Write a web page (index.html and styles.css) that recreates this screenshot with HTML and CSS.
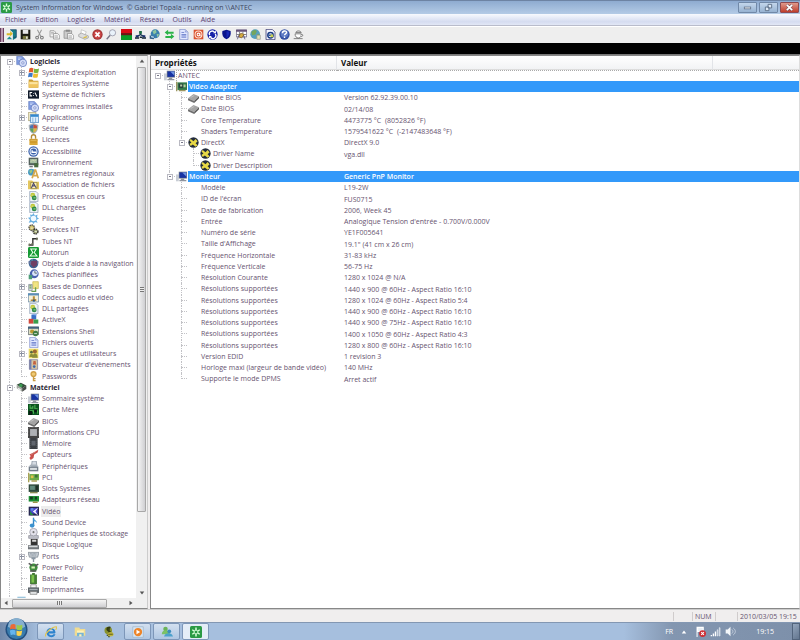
FILE: index.html
```
<!DOCTYPE html>
<html lang="fr">
<head>
<meta charset="utf-8">
<title>System Information for Windows</title>
<link rel="stylesheet" href="styles.css">
</head>
<body>
<svg class="sprite" aria-hidden="true">
<symbol id="recycle" viewBox="0 0 16 16"><rect width="16" height="16" rx="2" fill="#2b9a45"/><path d="M8 2v4M3 5l3 2M13 5l-3 2M3 11l3-2M13 11l-3-2M8 14v-4" stroke="#d9ffd9" stroke-width="2"/><circle cx="8" cy="8" r="2.500" fill="none" stroke="#d9ffd9"/></symbol>
<symbol id="exit" viewBox="0 0 16 16"><path d="M6 1h9v12l-5 3V5z" fill="#187d86"/><path d="M6 1h9v11h-4" fill="none" stroke="#123c66"/><path d="M1 6h5V3l4 4-4 4V9H1z" fill="#d8b82a"/><path d="M1 15l4-4 4 4z" fill="#208e94"/></symbol>
<symbol id="save" viewBox="0 0 16 16"><path d="M1 1h14v14H1z" fill="#1c1c14"/><path d="M4 1h8v6H4z" fill="#e8e8e8"/><path d="M4 10h8v5H4z" fill="#77773e"/><path d="M9 11h2v3H9z" fill="#fff"/></symbol>
<symbol id="cut" viewBox="0 0 16 16"><path d="M5 1l5 10M11 1L6 11" stroke="#999" stroke-width="1.500"/><g fill="none" stroke="#777" stroke-width="1.500"><circle cx="4.500" cy="12.500" r="2"/><circle cx="11.500" cy="12.500" r="2"/></g></symbol>
<symbol id="copy" viewBox="0 0 16 16"><g fill="#f4f4f4" stroke="#888"><path d="M1.500 2.500h6l2 2v7h-8z"/><path d="M6.500 6.500h6l3 3v5h-9z"/></g><path d="M3 5h4M3 7h3M8 10h5M8 12h5" stroke="#999"/></symbol>
<symbol id="paste" viewBox="0 0 16 16"><path d="M1.500 2.500h11v11h-11z" fill="#ccc" stroke="#888"/><path d="M4 1h6v3H4z" fill="#888"/><path d="M6.500 6.500h6l3 3v5h-9z" fill="#f6f6f6" stroke="#888"/><path d="M8 10h5M8 12h5" stroke="#999"/></symbol>
<symbol id="print" viewBox="0 0 16 16"><path d="M5 1l7 3-2 5-6-2z" fill="#fff" stroke="#bbb"/><path d="M1 8l4-2 10 4v3l-5 2-9-4z" fill="#ddd" stroke="#999"/><path d="M8 13l5-2" stroke="#d8bc42" stroke-width="2"/></symbol>
<symbol id="stop" viewBox="0 0 16 16"><circle cx="8" cy="8" r="7.500" fill="#9f3434"/><circle cx="8" cy="8" r="6" fill="#c94444"/><path d="M5 5l6 6M11 5l-6 6" stroke="#fff" stroke-width="2.500"/></symbol>
<symbol id="find" viewBox="0 0 16 16"><circle cx="9.500" cy="5.500" r="4.500" fill="#e9f2fa" stroke="#889"/><path d="M6 9l-5 6" stroke="#778" stroke-width="2"/></symbol>
<symbol id="redgreen" viewBox="0 0 16 16"><path d="M0 0h16v8H0z" fill="#d80d16"/><path d="M0 7h16v9H0z" fill="#0a9b27"/><path d="M0 6h16v3H0z" fill="#6b1414"/></symbol>
<symbol id="net" viewBox="0 0 16 16"><path d="M8 3v6M3 11l5-3 5 3" stroke="#173750" fill="none" stroke-width="2"/><path d="M6 3h4v4H6z" fill="#1d6c45"/><path d="M1 9h4v3H1zM11 9h4v3h-4z" fill="#1b2f70"/><path d="M0 13h6M7 12h3M10 13h6" stroke="#123" stroke-width="2"/></symbol>
<symbol id="globe" viewBox="0 0 16 16"><circle cx="9" cy="7" r="6.500" fill="#3a7fae"/><path d="M5 3l5-2 1 4-4 3zM11 7l4 1-3 4z" fill="#8fc79e"/><path d="M1 9l7 2-1 4-6-1z" fill="#35618a"/><path d="M3 10l4 1v2l-4-1z" fill="#bfe0f5"/></symbol>
<symbol id="swap" viewBox="0 0 16 16"><path d="M1 5l5-4v3h8v3H6v2zM15 11l-5-4v3H2v3h8v2z" fill="#2bb347"/></symbol>
<symbol id="doc" viewBox="0 0 16 16"><path d="M2.500.5h8l4 4v11h-12z" fill="#e2e8ff" stroke="#7686c4"/><path d="M10 1v4h4" fill="#9aa8dc"/><path d="M5 5h4M5 8h7M5 10h7M5 12h7" stroke="#4a62bd"/></symbol>
<symbol id="mail" viewBox="0 0 16 16"><path d="M1 1h14v14H1z" fill="#d95330"/><circle cx="8" cy="8" r="5" fill="none" stroke="#ffe1cf" stroke-width="1.500"/><circle cx="8" cy="8" r="2" fill="none" stroke="#fff" stroke-width="1.500"/><path d="M10 6v4h3" stroke="#fff" fill="none"/></symbol>
<symbol id="refresh" viewBox="0 0 16 16"><circle cx="8" cy="8" r="7.500" fill="#1521a8"/><path d="M4 9a4 4 0 0 1 7-4M12 7a4 4 0 0 1-7 5" stroke="#fff" fill="none" stroke-width="2"/><path d="M9 6h4V2zM7 10H3v4z" fill="#fff"/></symbol>
<symbol id="shield" viewBox="0 0 16 16"><path d="M8 1l6 2c1 6-1 10-6 12C3 13 1 9 2 3z" fill="#0b158c"/><path d="M8 3l4 1c0 4-1 7-4 9z" fill="#1a29b7"/></symbol>
<symbol id="grid" viewBox="0 0 16 16"><path d="M.5 1.500h15v10H.5z" fill="#fff" stroke="#4b4370"/><path d="M0 1h16v3H0z" fill="#665279"/><path d="M5 4v8M10 4v8M1 8h14" stroke="#555"/><path d="M7 6l5 2-4 5-4-2z" fill="#d3a93e" stroke="#835d22"/><path d="M4 9l-2 6M11 9l2 6" stroke="#443b62"/></symbol>
<symbol id="world" viewBox="0 0 16 16"><circle cx="7.500" cy="7.500" r="7" fill="#579fbd"/><path d="M2 4l5-3 3 2-2 5-5 1zM10 8l4-1-2 6-3 1z" fill="#76a65b"/><path d="M10 9h5v6h-5z" fill="#e7e1b2" stroke="#999"/></symbol>
<symbol id="pageie" viewBox="0 0 16 16"><path d="M1.500.5h9l4 4v11h-13z" fill="#f5f5ff" stroke="#202060"/><circle cx="8" cy="9" r="4" fill="none" stroke="#173a84" stroke-width="2"/><path d="M5 9h6" stroke="#173a84" stroke-width="2"/><path d="M8 8h4v4H8z" fill="#c9cf4c"/></symbol>
<symbol id="help" viewBox="0 0 16 16"><circle cx="8" cy="8" r="7.500" fill="#3451a5"/><circle cx="8" cy="7" r="5.500" fill="#5e7bc4"/><path d="M5 6c0-4 6-4 6-1 0 2-3 2-3 4M8 11v2" stroke="#fff" fill="none" stroke-width="2"/></symbol>
<symbol id="cup" viewBox="0 0 16 16"><path d="M3 7h9c0 3-1 6-4 6s-5-2-5-6z" fill="#fff" stroke="#555"/><path d="M12 8c3-1 3 3 0 3M1 14h13M4 5c2-3 6-3 8 0z" stroke="#555" fill="#eee"/></symbol>
<symbol id="soft" viewBox="0 0 16 16"><path d="M1 .5h8l3 3v9H1z" fill="#7f9be0" stroke="#7189c4"/><circle cx="10" cy="10" r="5.500" fill="#d3dcf7" stroke="#536db8"/><circle cx="10" cy="10" r="1.700" fill="#fff" stroke="#647bc2"/><path d="M3 3h5M3 5h3" stroke="#e3eaff"/></symbol>
<symbol id="win" viewBox="0 0 16 16"><path d="M2 2c2-1 4-1 6 0L7 8c-2-1-4-1-6 0z" fill="#e45c2b"/><path d="M9 2c2 1 4 1 7 0l-1 6c-2 1-4 1-7 0z" fill="#7eb63b"/><path d="M1 9c2-1 4-1 6 0l-1 6c-2-1-4-1-6 0z" fill="#3c79c9"/><path d="M8 9c2 1 4 1 7 0l-1 6c-2 1-5 1-7 0z" fill="#f0bd32"/></symbol>
<symbol id="folder" viewBox="0 0 16 16"><path d="M1 2h5l2 2h7v10H1z" fill="#c79c38"/><path d="M1 5h14v9H1z" fill="#f0c55e"/><path d="M2 6h12v3H2z" fill="#fbe4a0"/></symbol>
<symbol id="cmd" viewBox="0 0 16 16"><path d="M0 2h16v12H0z" fill="#111b2b"/><path d="M6 5H3v5h3M8 6v1M8 9v1M10 5l3 6" stroke="#fff" fill="none" stroke-width="1.500"/></symbol>
<symbol id="apps" viewBox="0 0 16 16"><path d="M.5.5h11v12H.5z" fill="#f4ecc8" stroke="#a29869"/><path d="M3.500 3.500h12v12h-12z" fill="#dceeff" stroke="#2f74b5"/><path d="M4 4h11v3H4z" fill="#3289cf"/><path d="M7 8v7M11 8v7" stroke="#699fca"/></symbol>
<symbol id="sec" viewBox="0 0 16 16"><path d="M8 0l7 3c0 7-2 11-7 13C3 14 1 10 1 3z" fill="#a8b0b8"/><path d="M8 2v6H3V4z" fill="#4874b5"/><path d="M8 2l5 2v4H8z" fill="#c94e3c"/><path d="M3 8h5v6C5 13 3 11 3 8z" fill="#58a160"/><path d="M8 8h5c0 3-2 5-5 6z" fill="#d9b73f"/></symbol>
<symbol id="lock" viewBox="0 0 16 16"><path d="M5 7V4c0-4 6-4 6 0v3" fill="none" stroke="#b38933" stroke-width="2"/><path d="M2 7h12v9H2z" fill="#dba938"/><path d="M3 8h10v2H3zM3 12h10" fill="#f3d176" stroke="#c38e25"/></symbol>
<symbol id="access" viewBox="0 0 16 16"><circle cx="8" cy="8" r="7.500" fill="#3b61aa"/><circle cx="8" cy="8" r="5" fill="none" stroke="#e8f0ff" stroke-width="1.500"/><path d="M6 6v3h6" stroke="#fff" fill="none" stroke-width="2"/></symbol>
<symbol id="env" viewBox="0 0 16 16"><path d="M1 1h14v11H1z" fill="#54615d"/><path d="M3 3h10v6H3z" fill="#a7c0a2"/><path d="M4 7l3-3 2 2 3-2" stroke="#e4e0bb" fill="none"/><path d="M9 9h6v6H9z" fill="#486c3e"/><path d="M2 14h5" stroke="#777" stroke-width="2"/></symbol>
<symbol id="region" viewBox="0 0 16 16"><circle cx="5" cy="6" r="5" fill="#4b9bc2"/><path d="M2 4l4-2v4L3 8z" fill="#9cc979"/><path d="M6 15l4-12h1l4 12M8 11h5" stroke="#d7a94b" stroke-width="2.500" fill="none"/></symbol>
<symbol id="assoc" viewBox="0 0 16 16"><path d="M0 2h6l2 2h8v11H0z" fill="#e3c660"/><path d="M4 5h9v9H4z" fill="#fff4b2" stroke="#8b7b38"/><path d="M5 13l3-7 4 7M6 10h4" stroke="#48456f" fill="none" stroke-width="1.500"/></symbol>
<symbol id="dll" viewBox="0 0 16 16"><path d="M2.500.5h9l3 3v12h-12z" fill="#edf3f7" stroke="#8798b0"/><circle cx="7" cy="6" r="3.500" fill="#c0c83a"/><circle cx="9" cy="10" r="3.500" fill="#2d8b4b"/><path d="M5 6h3M8 10h3" stroke="#e8efb0"/></symbol>
<symbol id="gearblue" viewBox="0 0 16 16"><path d="M8 0l2 4 4-2-1 4 3 2-4 2 2 4-4-1-2 3-2-3-5 1 2-4-3-3 4-1-1-4 3 1z" fill="#66aee0"/><circle cx="8" cy="8" r="4" fill="#f0f9ff"/></symbol>
<symbol id="gears" viewBox="0 0 16 16"><circle cx="5.500" cy="5.500" r="4" fill="#d5c46b" stroke="#555" stroke-width="2" stroke-dasharray="2 1"/><circle cx="11" cy="11" r="3.500" fill="#a3aa75" stroke="#383838" stroke-width="2" stroke-dasharray="2 1"/><path d="M4 6h3M10 11h3" stroke="#fff"/></symbol>
<symbol id="pipe" viewBox="0 0 16 16"><path d="M1 13h6V4h7" stroke="#333" fill="none" stroke-width="2"/><path d="M6 10v3M13 2v4M2 11v4" stroke="#72755f" stroke-width="2" fill="none"/></symbol>
<symbol id="auto" viewBox="0 0 16 16"><rect width="16" height="16" rx="2" fill="#169a34"/><path d="M4 3h8L9 8l4 5H3l4-5z" fill="none" stroke="#eaffec" stroke-width="1.500"/></symbol>
<symbol id="heart" viewBox="0 0 16 16"><circle cx="8" cy="8" r="7" fill="#386493"/><path d="M0 5h16l-3 5H3z" fill="#65739b"/><path d="M5 4h8v6l-5 4-4-5z" fill="#6f3f63"/><path d="M3 3l4-2v3z" fill="#5da0a7"/></symbol>
<symbol id="task" viewBox="0 0 16 16"><circle cx="9" cy="7" r="6.500" fill="#4a60ae"/><circle cx="10" cy="6" r="4" fill="#dce5fb"/><path d="M10 3v3h3" stroke="#344" fill="none"/><path d="M1 8l5 1v6H1z" fill="#4d9c77"/></symbol>
<symbol id="db" viewBox="0 0 16 16"><path d="M7 1h8v10H7z" fill="#f1e483" stroke="#c7b44c"/><path d="M1 5h5v9H1z" fill="#d8dde2" stroke="#78848d"/><path d="M2 7h3M2 10h3M5 15h6V9" stroke="#6c9e52" fill="none" stroke-width="2"/></symbol>
<symbol id="codec" viewBox="0 0 16 16"><path d="M.5 2.500h15v12H.5z" fill="#f4f0d9" stroke="#537899"/><path d="M0 2h16v3H0z" fill="#5a8eb8"/><path d="M7 6h3v4h2v3H4v-2h3z" fill="#b88c3b"/><path d="M7 11h3v3H7z" fill="#315b80"/></symbol>
<symbol id="activex" viewBox="0 0 16 16"><path d="M5 1h7v7H5z" fill="#3a71c8"/><path d="M1 7h7v7H1z" fill="#d1493c"/><path d="M8 8h7v6H8z" fill="#3a9e4b"/><path d="M5 1l2-1h6l-1 2z" fill="#89b0ea"/></symbol>
<symbol id="ext" viewBox="0 0 16 16"><path d="M.5 1.500h15v11H.5z" fill="#dedfc3" stroke="#454e56"/><path d="M0 1h16v3H0z" fill="#41617d"/><circle cx="6" cy="8" r="3" fill="#ba9832"/><circle cx="11" cy="11" r="4" fill="#417c45"/><path d="M9 11h4" stroke="#fff"/></symbol>
<symbol id="group" viewBox="0 0 16 16"><path d="M1 1h14v14H1z" fill="#ead968"/><circle cx="5" cy="6" r="2" fill="#566744"/><circle cx="10" cy="5" r="3" fill="#9a6633"/><path d="M2 13c1-7 6-5 6 0M6 14c1-8 8-8 8 0" fill="#8a8c3b"/></symbol>
<symbol id="event" viewBox="0 0 16 16"><path d="M2 1h12v14H2z" fill="#d8c7a2" stroke="#6f7198"/><path d="M2 1h3v14H2z" fill="#777eac"/><path d="M8 3h3l1 5H7z" fill="#c46342"/><circle cx="9" cy="11" r="2" fill="#3c67a8"/></symbol>
<symbol id="key" viewBox="0 0 16 16"><circle cx="8" cy="4.500" r="3.500" fill="#efcb74" stroke="#d0a048" stroke-width="2"/><path d="M8 8v7M9 11h2M9 14h2" stroke="#c99b44" stroke-width="2"/></symbol>
<symbol id="hard" viewBox="0 0 16 16"><path d="M1 4l6-3 8 4-6 4z" fill="#354d3b"/><path d="M1 4l8 5v5L1 9z" fill="#a1a79f"/><path d="M9 9l6-4v5l-6 4z" fill="#474b49"/><circle cx="7" cy="5" r="2.500" fill="#3c9a52"/><path d="M3 9l4 3" stroke="#eee" stroke-width="2"/></symbol>
<symbol id="pc" viewBox="0 0 16 16"><path d="M0 5h4v10H0z" fill="#c8cdd5"/><path d="M4 1h12v10H4z" fill="#78808c"/><path d="M5 2h10v8H5z" fill="#1733a2"/><path d="M9 2h6v6z" fill="#6e95e3"/><path d="M7 11h5v2h3v2H5v-2h2z" fill="#8e949e"/></symbol>
<symbol id="board" viewBox="0 0 16 16"><path d="M0 0h16v16H0z" fill="#0c5420"/><path d="M3 1v5h4V3M10 1v6h4M3 10h5v4M11 10h3v4" stroke="#4cb453" stroke-width="1.500" fill="none"/><path d="M9 8h4v4H9zM1 10h5v6H1z" fill="#071c11"/></symbol>
<symbol id="chip" viewBox="0 0 16 16"><path d="M0 9l8-6 8 3-7 7z" fill="#a4a4a4"/><path d="M0 9l9 4v3l-9-4z" fill="#6f6f6f"/><path d="M9 13l7-7v3l-7 7z" fill="#555"/><path d="M4 8l5-3" stroke="#ccc"/></symbol>
<symbol id="cpu" viewBox="0 0 16 16"><path d="M0 0h16v16H0z" fill="#444"/><path d="M3 3h10v10H3z" fill="#aeb1b5"/><path d="M1 2v12M2 1h12M15 2v12" stroke="#888" stroke-dasharray="1 1"/></symbol>
<symbol id="mem" viewBox="0 0 16 16"><path d="M2 0h12v16H2z" fill="#3b3f44"/><path d="M5 4h6v7H5z" fill="#61666e"/><path d="M3 1v14M13 1v14" stroke="#9a9ea5" stroke-dasharray="1 2"/></symbol>
<symbol id="sensor" viewBox="0 0 16 16"><path d="M15 1l-1 4-5 3-1 5-4 3-2-3 2-3-2-2 6-3z" fill="#c9504c"/><path d="M5 8l3-2 4-3" stroke="#f1a195"/></symbol>
<symbol id="periph" viewBox="0 0 16 16"><path d="M6 0h6l1 8H5z" fill="#d5dbe2" stroke="#7b8795"/><path d="M1 8h14v7H1z" fill="#727d89"/><path d="M3 10h10v3H3z" fill="#d9dee2"/><path d="M1 8l3-3h8l3 3" fill="#a8b1bb"/></symbol>
<symbol id="pci" viewBox="0 0 16 16"><path d="M2 3h14v9H2z" fill="#6bac48"/><path d="M4 5h4v4H4z" fill="#dec34c"/><path d="M10 4h4v4h-4z" fill="#3f733c"/><path d="M1 1v14M5 13h8" stroke="#a9a156" stroke-width="2"/></symbol>
<symbol id="slot" viewBox="0 0 16 16"><path d="M1 2h15v11H1z" fill="#304b3d"/><path d="M3 4h7v6H3z" fill="#5f897d"/><path d="M12 4h2v6h-2z" fill="#182320"/><path d="M3 14h11" stroke="#8c8b55" stroke-width="2"/></symbol>
<symbol id="nic" viewBox="0 0 16 16"><path d="M1 3h15v8H1z" fill="#1c8c32"/><path d="M3 4h4v4H3zM10 4h3v4h-3z" fill="#153d21"/><path d="M7 12h7" stroke="#968e3b" stroke-width="2"/></symbol>
<symbol id="video" viewBox="0 0 16 16"><path d="M1 1h15v13H1z" fill="#262750"/><path d="M3 3h11v8H3z" fill="#4c47cf"/><path d="M3 13V7l5 6z" fill="#258544"/><path d="M15 2L7 8l8 6-4-6z" fill="#f0f0ff"/><circle cx="6" cy="5" r="2" fill="#5d8be0"/></symbol>
<symbol id="sound" viewBox="0 0 16 16"><path d="M8 1v11" stroke="#3284c4" stroke-width="2"/><path d="M8 1c1 4 5 3 5 8-2-3-3-3-5-3z" fill="#4ca3db"/><ellipse cx="6" cy="12.500" rx="3.500" ry="3" fill="#3b91ce"/></symbol>
<symbol id="storage" viewBox="0 0 16 16"><path d="M1 11h14v4H1z" fill="#c1c3cb" stroke="#8a8b96"/><circle cx="8" cy="6" r="5.500" fill="#e2e1ea" stroke="#92919f"/><circle cx="8" cy="6" r="1.500" fill="#777"/></symbol>
<symbol id="disk" viewBox="0 0 16 16"><path d="M4 0h10v9H4z" fill="#333"/><path d="M6 1h6v3H6z" fill="#d6d6d6"/><path d="M0 9h16v6H0z" fill="#70757a"/><path d="M1 10h13v2H1z" fill="#d5d8da"/></symbol>
<symbol id="port" viewBox="0 0 16 16"><path d="M0 2h16l-2 7H2z" fill="#c4cbd2" stroke="#76808a"/><path d="M3 4h10M4 6h8" stroke="#65717d" stroke-dasharray="1 1"/><path d="M5 9h6v3H9v4H7v-4H5z" fill="#8a96a2"/></symbol>
<symbol id="power" viewBox="0 0 16 16"><circle cx="8" cy="8" r="6" fill="#3f8a3d"/><path d="M1 2l5 3M15 3l-5 3M3 13h9" stroke="#555" stroke-width="2"/><path d="M5 8h5" stroke="#d9f3ba" stroke-width="3"/></symbol>
<symbol id="battery" viewBox="0 0 16 16"><path d="M6 0h4v2h3v14H3V2h3z" fill="#457c35"/><path d="M5 3h4v11H5z" fill="#7bc24c"/></symbol>
<symbol id="printer" viewBox="0 0 16 16"><path d="M4 1h8v5H4z" fill="#f4f4f4" stroke="#777"/><path d="M0 5h16v8H0z" fill="#5e656b"/><path d="M2 7h12v2H2z" fill="#a5adb3"/><path d="M3 11h10v4H3z" fill="#e5e7e9" stroke="#777"/></symbol>
<symbol id="peek" viewBox="0 0 16 16"><path d="M2 1h12v10H2z" fill="#9cc6de"/></symbol>
<symbol id="card" viewBox="0 0 16 16"><path d="M2 2h14v11H2z" fill="#337847"/><path d="M4 4h6v6H4z" fill="#273b3b"/><path d="M6 5h3v3H6zM11 5h3v4h-3z" fill="#b7cda3"/><path d="M1 1v14M4 14h10" stroke="#9b9762" stroke-width="2"/></symbol>
<symbol id="dx" viewBox="0 0 16 16"><circle cx="8" cy="8" r="7.500" fill="#222b3c"/><path d="M4 3l4 3 3-3 3 3-3 3 3 3-3 2-4-3-3 2-2-3 3-2-3-3z" fill="#e7d846"/></symbol>
<symbol id="ie" viewBox="0 0 16 16"><path d="M13 10H5c1 3 5 3 6 1h3c-2 6-12 5-12-3 0-7 12-8 12 1zM5 7h6c-1-3-5-3-6 0z" fill="#2d83cd"/><path d="M1 14C-1 10 9 1 15 1c1 1 0 3-1 4" stroke="#e4c54d" fill="none" stroke-width="1.500"/></symbol>
<symbol id="files" viewBox="0 0 16 16"><path d="M1 2h6l1 2h7v9H1z" fill="#f1dc90"/><path d="M4 6h9v8H4z" fill="#fff2b8"/><path d="M4 14V9h9v5h-3v-3H7v3z" fill="#78b4d4"/></symbol>
<symbol id="coin" viewBox="0 0 16 16"><ellipse cx="7" cy="6" rx="5" ry="5" fill="#87922e"/><path d="M10 2c-5-1-6 3-2 5s2 6-3 5M8 1v14" stroke="#343c12" fill="none" stroke-width="2"/><ellipse cx="10" cy="11" rx="4" ry="3" fill="#bdb43d"/><path d="M7 11h6" stroke="#454a18"/></symbol>
<symbol id="play" viewBox="0 0 16 16"><path d="M1 1h14v14H1z" fill="#d6e6f4" stroke="#9fb6ca"/><circle cx="8" cy="8" r="5.500" fill="#ed8428"/><path d="M6 5l5 3-5 3z" fill="#fff"/></symbol>
<symbol id="users" viewBox="0 0 16 16"><circle cx="6" cy="4" r="3" fill="#6ab358"/><path d="M1 11c0-7 10-7 11 0z" fill="#7bc266"/><circle cx="11" cy="7" r="2.500" fill="#3b8dbd"/><path d="M4 14c1-6 11-6 12 0z" fill="#4ca1cd"/></symbol>
<symbol id="orb" viewBox="0 0 24 24"><circle cx="12" cy="12" r="11.500" fill="#224f80"/><circle cx="12" cy="12" r="10" fill="#387cae"/><path d="M3 9a9 9 0 0 1 18 0c-5 3-13 3-18 0z" fill="#86afcf"/><path d="M6 7c2-1 4-1 5 0v5c-2-1-4-1-6 0z" fill="#ed6a35"/><path d="M12 7c2 1 4 1 6 0v5c-2 1-4 1-6 0z" fill="#9bcc4a"/><path d="M5 13c2-1 4-1 6 0v5c-2-1-3-1-5 0z" fill="#65b4ed"/><path d="M12 13c2 1 4 1 6 0l-1 5c-2 1-3 1-5 0z" fill="#fbd34f"/></symbol>
<symbol id="flag" viewBox="0 0 16 16"><path d="M3 1v15M4 2h8v6H4z" stroke="#fff" fill="#e8eef5" stroke-width="1.500"/><circle cx="11" cy="11" r="5" fill="#cf2f35"/><path d="M9 9l4 4M13 9l-4 4" stroke="#fff" stroke-width="1.500"/></symbol>
<symbol id="signal" viewBox="0 0 16 16"><path d="M1 13h2v2H1zM4 11h2v4H4zM7 8h2v7H7z" fill="#fff"/><path d="M10.500 5.500h1v9h-1zM13.500 2.500h1v12h-1z" fill="#a9b6c5" stroke="#e8eef4"/></symbol>
<symbol id="speaker" viewBox="0 0 16 16"><path d="M1 5h3l4-4v14l-4-4H1z" fill="#f4f7fa"/><path d="M10 5c2 2 2 4 0 6M12 3c4 3 4 7 0 10" stroke="#dce4ed" fill="none"/></symbol>
<symbol id="arrow" viewBox="0 0 8 8"><path d="M1 6l3-4 3 4z" fill="currentColor"/></symbol>
</svg>

<header class="titlebar">
<svg class="icon"><use href="#recycle"/></svg>
<h1>System Information for Windows&nbsp; © Gabriel Topala - running on \\ANTEC</h1>
<div class="winbuttons">
<button type="button" aria-label="Minimize"><svg viewBox="0 0 18 10"><rect x="5.500" y="4.500" width="7" height="2" fill="#fff" stroke="#6a7a90"/></svg></button>
<button type="button" aria-label="Restore"><svg viewBox="0 0 18 10"><path d="M8.500 1.500h4v4h-4zM5.500 4.500h4v4h-4z" fill="#dce8f5" stroke="#596c84"/></svg></button>
<button type="button" class="close" aria-label="Close"><svg viewBox="0 0 18 10"><path d="M6 2l6 6M12 2L6 8" stroke="#6d4650" stroke-width="3"/><path d="M6 2l6 6M12 2L6 8" stroke="#fff" stroke-width="2"/></svg></button>
</div>
</header>
<nav class="menu"><button type="button">Fichier</button><button type="button">Edition</button><button type="button">Logiciels</button><button type="button">Matériel</button><button type="button">Réseau</button><button type="button">Outils</button><button type="button">Aide</button></nav>
<div class="toolbar"><span class="grip"></span><div class="tools">
<button type="button" aria-label="Quitter"><svg><use href="#exit"/></svg></button>
<button type="button" aria-label="Enregistrer"><svg><use href="#save"/></svg></button>
<button type="button" aria-label="Couper"><svg><use href="#cut"/></svg></button>
<button type="button" aria-label="Copier"><svg><use href="#copy"/></svg></button>
<button type="button" aria-label="Coller"><svg><use href="#paste"/></svg></button>
<button type="button" aria-label="Imprimer"><svg><use href="#print"/></svg></button>
<button type="button" aria-label="Arrêter"><svg><use href="#stop"/></svg></button>
<button type="button" aria-label="Rechercher"><svg><use href="#find"/></svg></button>
<button type="button" aria-label="Test"><svg><use href="#redgreen"/></svg></button>
<button type="button" aria-label="Réseau local"><svg><use href="#net"/></svg></button>
<button type="button" aria-label="Internet"><svg><use href="#globe"/></svg></button>
<button type="button" aria-label="Échanges"><svg><use href="#swap"/></svg></button>
<button type="button" aria-label="Rapport"><svg><use href="#doc"/></svg></button>
<button type="button" aria-label="Courriel"><svg><use href="#mail"/></svg></button>
<button type="button" aria-label="Actualiser"><svg><use href="#refresh"/></svg></button>
<button type="button" aria-label="Protection"><svg><use href="#shield"/></svg></button>
<button type="button" aria-label="Options"><svg><use href="#grid"/></svg></button>
<button type="button" aria-label="Site"><svg><use href="#world"/></svg></button>
<button type="button" aria-label="Page"><svg><use href="#pageie"/></svg></button>
<button type="button" aria-label="Assistance"><svg><use href="#help"/></svg></button>
<button type="button" aria-label="Don"><svg><use href="#cup"/></svg></button>
</div></div>
<div class="band"></div>

<main>
<aside>
<ul class="tree">
<li class="root"><i class="g first"><button type="button" class="box" aria-label="Réduire"></button></i><svg><use href="#soft"/></svg><b>Logiciels</b></li>
<li><i class="g v"></i><i class="g t"><button type="button" class="box plus" aria-label="Développer"></button></i><svg><use href="#win"/></svg><span>Système d'exploitation</span></li>
<li><i class="g v"></i><i class="g t"></i><svg><use href="#folder"/></svg><span>Répertoires Système</span></li>
<li><i class="g v"></i><i class="g t"></i><svg><use href="#cmd"/></svg><span>Système de fichiers</span></li>
<li><i class="g v"></i><i class="g t"></i><svg><use href="#soft"/></svg><span>Programmes installés</span></li>
<li><i class="g v"></i><i class="g t"><button type="button" class="box plus" aria-label="Développer"></button></i><svg><use href="#apps"/></svg><span>Applications</span></li>
<li><i class="g v"></i><i class="g t"></i><svg><use href="#sec"/></svg><span>Sécurité</span></li>
<li><i class="g v"></i><i class="g t"></i><svg><use href="#lock"/></svg><span>Licences</span></li>
<li><i class="g v"></i><i class="g t"></i><svg><use href="#access"/></svg><span>Accessibilité</span></li>
<li><i class="g v"></i><i class="g t"></i><svg><use href="#env"/></svg><span>Environnement</span></li>
<li><i class="g v"></i><i class="g t"></i><svg><use href="#region"/></svg><span>Paramètres régionaux</span></li>
<li><i class="g v"></i><i class="g t"></i><svg><use href="#assoc"/></svg><span>Association de fichiers</span></li>
<li><i class="g v"></i><i class="g t"></i><svg><use href="#dll"/></svg><span>Processus en cours</span></li>
<li><i class="g v"></i><i class="g t"></i><svg><use href="#dll"/></svg><span>DLL chargées</span></li>
<li><i class="g v"></i><i class="g t"></i><svg><use href="#gearblue"/></svg><span>Pilotes</span></li>
<li><i class="g v"></i><i class="g t"></i><svg><use href="#gears"/></svg><span>Services NT</span></li>
<li><i class="g v"></i><i class="g t"></i><svg><use href="#pipe"/></svg><span>Tubes NT</span></li>
<li><i class="g v"></i><i class="g t"></i><svg><use href="#auto"/></svg><span>Autorun</span></li>
<li><i class="g v"></i><i class="g t"></i><svg><use href="#heart"/></svg><span>Objets d'aide à la navigation</span></li>
<li><i class="g v"></i><i class="g t"></i><svg><use href="#task"/></svg><span>Tâches planifiées</span></li>
<li><i class="g v"></i><i class="g t"><button type="button" class="box plus" aria-label="Développer"></button></i><svg><use href="#db"/></svg><span>Bases de Données</span></li>
<li><i class="g v"></i><i class="g t"></i><svg><use href="#codec"/></svg><span>Codecs audio et vidéo</span></li>
<li><i class="g v"></i><i class="g t"></i><svg><use href="#dll"/></svg><span>DLL partagées</span></li>
<li><i class="g v"></i><i class="g t"></i><svg><use href="#activex"/></svg><span>ActiveX</span></li>
<li><i class="g v"></i><i class="g t"></i><svg><use href="#ext"/></svg><span>Extensions Shell</span></li>
<li><i class="g v"></i><i class="g t"></i><svg><use href="#doc"/></svg><span>Fichiers ouverts</span></li>
<li><i class="g v"></i><i class="g t"><button type="button" class="box plus" aria-label="Développer"></button></i><svg><use href="#group"/></svg><span>Groupes et utilisateurs</span></li>
<li><i class="g v"></i><i class="g t"></i><svg><use href="#event"/></svg><span>Observateur d'évènements</span></li>
<li><i class="g v"></i><i class="g t last"></i><svg><use href="#key"/></svg><span>Passwords</span></li>
<li class="root"><i class="g t"><button type="button" class="box" aria-label="Réduire"></button></i><svg><use href="#hard"/></svg><b>Matériel</b></li>
<li><i class="g v"></i><i class="g t"></i><svg><use href="#pc"/></svg><span>Sommaire système</span></li>
<li><i class="g v"></i><i class="g t"></i><svg><use href="#board"/></svg><span>Carte Mère</span></li>
<li><i class="g v"></i><i class="g t"></i><svg><use href="#chip"/></svg><span>BIOS</span></li>
<li><i class="g v"></i><i class="g t"></i><svg><use href="#cpu"/></svg><span>Informations CPU</span></li>
<li><i class="g v"></i><i class="g t"></i><svg><use href="#mem"/></svg><span>Mémoire</span></li>
<li><i class="g v"></i><i class="g t"></i><svg><use href="#sensor"/></svg><span>Capteurs</span></li>
<li><i class="g v"></i><i class="g t"></i><svg><use href="#periph"/></svg><span>Périphériques</span></li>
<li><i class="g v"></i><i class="g t"></i><svg><use href="#pci"/></svg><span>PCI</span></li>
<li><i class="g v"></i><i class="g t"></i><svg><use href="#slot"/></svg><span>Slots Systèmes</span></li>
<li><i class="g v"></i><i class="g t"></i><svg><use href="#nic"/></svg><span>Adapteurs réseau</span></li>
<li class="selected"><i class="g v"></i><i class="g t"></i><svg><use href="#video"/></svg><span>Vidéo</span></li>
<li><i class="g v"></i><i class="g t"></i><svg><use href="#sound"/></svg><span>Sound Device</span></li>
<li><i class="g v"></i><i class="g t"></i><svg><use href="#storage"/></svg><span>Périphériques de stockage</span></li>
<li><i class="g v"></i><i class="g t"></i><svg><use href="#disk"/></svg><span>Disque Logique</span></li>
<li><i class="g v"></i><i class="g t"><button type="button" class="box plus" aria-label="Développer"></button></i><svg><use href="#port"/></svg><span>Ports</span></li>
<li><i class="g v"></i><i class="g t"></i><svg><use href="#power"/></svg><span>Power Policy</span></li>
<li><i class="g v"></i><i class="g t"></i><svg><use href="#battery"/></svg><span>Batterie</span></li>
<li><i class="g v"></i><i class="g t last"></i><svg><use href="#printer"/></svg><span>Imprimantes</span></li>
<li class="root"><i class="g v"></i><svg><use href="#peek"/></svg></li>
</ul>
<div class="vscroll"><svg><use href="#arrow"/></svg><span class="thumb"><i></i></span><svg class="down"><use href="#arrow"/></svg></div>
<div class="hscroll"><svg class="left"><use href="#arrow"/></svg><span class="thumb"><i></i></span><svg class="right"><use href="#arrow"/></svg></div>
</aside>

<section class="details">
<table>
<colgroup><col class="c-name"><col class="c-value"><col></colgroup>
<thead><tr><th>Propriétés</th><th>Valeur</th><th></th></tr></thead>
<tbody>
<tr class="focus"><td><div class="name"><i class="g only"><button type="button" class="box" aria-label="Réduire"></button></i><svg><use href="#pc"/></svg><span>ANTEC</span></div></td><td colspan="2"></td></tr>
<tr class="band-row"><td><div class="name"><i class="g"></i><i class="g t"><button type="button" class="box" aria-label="Réduire"></button></i><svg><use href="#card"/></svg><span>Video Adapter</span></div></td><td colspan="2"></td></tr>
<tr><td><div class="name"><i class="g"></i><i class="g v"></i><i class="g t"></i><svg><use href="#chip"/></svg><span>Chaine BIOS</span></div></td><td colspan="2">Version 62.92.39.00.10</td></tr>
<tr><td><div class="name"><i class="g"></i><i class="g v"></i><i class="g t"></i><svg><use href="#chip"/></svg><span>Date BIOS</span></div></td><td colspan="2">02/14/08</td></tr>
<tr><td><div class="name"><i class="g"></i><i class="g v"></i><i class="g t"></i><svg></svg><span>Core Temperature</span></div></td><td colspan="2">4473775 °C&nbsp; (8052826 °F)</td></tr>
<tr><td><div class="name"><i class="g"></i><i class="g v"></i><i class="g t"></i><svg></svg><span>Shaders Temperature</span></div></td><td colspan="2">1579541622 °C&nbsp; (-2147483648 °F)</td></tr>
<tr><td><div class="name"><i class="g"></i><i class="g v"></i><i class="g t last"><button type="button" class="box" aria-label="Réduire"></button></i><svg><use href="#dx"/></svg><span>DirectX</span></div></td><td colspan="2">DirectX 9.0</td></tr>
<tr><td><div class="name"><i class="g"></i><i class="g v"></i><i class="g"></i><i class="g t"></i><svg><use href="#dx"/></svg><span>Driver Name</span></div></td><td colspan="2">vga.dll</td></tr>
<tr><td><div class="name"><i class="g"></i><i class="g v"></i><i class="g"></i><i class="g t last"></i><svg><use href="#dx"/></svg><span>Driver Description</span></div></td><td colspan="2"></td></tr>
<tr class="band-row"><td><div class="name"><i class="g"></i><i class="g t last"><button type="button" class="box" aria-label="Réduire"></button></i><svg><use href="#pc"/></svg><span>Moniteur</span></div></td><td colspan="2">Generic PnP Monitor</td></tr>
<tr><td><div class="name"><i class="g"></i><i class="g"></i><i class="g t"></i><svg></svg><span>Modèle</span></div></td><td colspan="2">L19-2W</td></tr>
<tr><td><div class="name"><i class="g"></i><i class="g"></i><i class="g t"></i><svg></svg><span>ID de l'écran</span></div></td><td colspan="2">FUS0715</td></tr>
<tr><td><div class="name"><i class="g"></i><i class="g"></i><i class="g t"></i><svg></svg><span>Date de fabrication</span></div></td><td colspan="2">2006, Week 45</td></tr>
<tr><td><div class="name"><i class="g"></i><i class="g"></i><i class="g t"></i><svg></svg><span>Entrée</span></div></td><td colspan="2">Analogique Tension d'entrée - 0.700V/0.000V</td></tr>
<tr><td><div class="name"><i class="g"></i><i class="g"></i><i class="g t"></i><svg></svg><span>Numéro de série</span></div></td><td colspan="2">YE1F005641</td></tr>
<tr><td><div class="name"><i class="g"></i><i class="g"></i><i class="g t"></i><svg></svg><span>Taille d'Affichage</span></div></td><td colspan="2">19.1" (41 cm x 26 cm)</td></tr>
<tr><td><div class="name"><i class="g"></i><i class="g"></i><i class="g t"></i><svg></svg><span>Fréquence Horizontale</span></div></td><td colspan="2">31-83 kHz</td></tr>
<tr><td><div class="name"><i class="g"></i><i class="g"></i><i class="g t"></i><svg></svg><span>Fréquence Verticale</span></div></td><td colspan="2">56-75 Hz</td></tr>
<tr><td><div class="name"><i class="g"></i><i class="g"></i><i class="g t"></i><svg></svg><span>Résolution Courante</span></div></td><td colspan="2">1280 x 1024 @ N/A</td></tr>
<tr><td><div class="name"><i class="g"></i><i class="g"></i><i class="g t"></i><svg></svg><span>Résolutions supportées</span></div></td><td colspan="2">1440 x 900 @ 60Hz - Aspect Ratio 16:10</td></tr>
<tr><td><div class="name"><i class="g"></i><i class="g"></i><i class="g t"></i><svg></svg><span>Résolutions supportées</span></div></td><td colspan="2">1280 x 1024 @ 60Hz - Aspect Ratio 5:4</td></tr>
<tr><td><div class="name"><i class="g"></i><i class="g"></i><i class="g t"></i><svg></svg><span>Résolutions supportées</span></div></td><td colspan="2">1440 x 900 @ 60Hz - Aspect Ratio 16:10</td></tr>
<tr><td><div class="name"><i class="g"></i><i class="g"></i><i class="g t"></i><svg></svg><span>Résolutions supportées</span></div></td><td colspan="2">1440 x 900 @ 75Hz - Aspect Ratio 16:10</td></tr>
<tr><td><div class="name"><i class="g"></i><i class="g"></i><i class="g t"></i><svg></svg><span>Résolutions supportées</span></div></td><td colspan="2">1400 x 1050 @ 60Hz - Aspect Ratio 4:3</td></tr>
<tr><td><div class="name"><i class="g"></i><i class="g"></i><i class="g t"></i><svg></svg><span>Résolutions supportées</span></div></td><td colspan="2">1280 x 800 @ 60Hz - Aspect Ratio 16:10</td></tr>
<tr><td><div class="name"><i class="g"></i><i class="g"></i><i class="g t"></i><svg></svg><span>Version EDID</span></div></td><td colspan="2">1 revision 3</td></tr>
<tr><td><div class="name"><i class="g"></i><i class="g"></i><i class="g t"></i><svg></svg><span>Horloge maxi (largeur de bande vidéo)</span></div></td><td colspan="2">140 MHz</td></tr>
<tr><td><div class="name"><i class="g"></i><i class="g"></i><i class="g t last"></i><svg></svg><span>Supporte le mode DPMS</span></div></td><td colspan="2">Arret actif</td></tr>
</tbody>
</table>
</section>
</main>

<div class="status"><span></span><span class="num">NUM</span><span class="gap"></span><span class="date">2010/03/05 19:15</span></div>
<footer class="taskbar">
<button type="button" class="start" aria-label="Démarrer"><svg><use href="#orb"/></svg></button>
<div class="apps">
<button type="button" class="open" aria-label="Internet Explorer"><svg><use href="#ie"/></svg></button>
<button type="button" aria-label="Explorateur"><svg><use href="#files"/></svg></button>
<button type="button" aria-label="Comptes"><svg><use href="#coin"/></svg></button>
<button type="button" class="open" aria-label="Lecteur"><svg><use href="#play"/></svg></button>
<button type="button" class="open" aria-label="Messenger"><svg><use href="#users"/></svg></button>
<button type="button" class="open active" aria-label="System Information"><svg><use href="#recycle"/></svg></button>
</div>
<div class="tray"><span class="lang">FR</span><svg class="up"><use href="#arrow"/></svg><svg><use href="#flag"/></svg><svg><use href="#signal"/></svg><svg><use href="#speaker"/></svg><time>19:15</time><button type="button" class="desk" aria-label="Bureau"></button></div>
</footer>
</body>
</html>
```
FILE: styles.css
```
* { box-sizing: border-box; }
body {
  margin: 0;
  height: 100vh;
  display: flex;
  flex-direction: column;
  overflow: hidden;
  background: #f0eeee;
  color: #67536f;
  font: 7px/11px "Open Sans", "Noto Sans", sans-serif;
}
button { margin: 0; padding: 0; border: 0; background: none; font: inherit; color: inherit; }
svg { display: block; flex: none; width: 11px; height: 11px; }
.sprite { position: absolute; width: 0; height: 0; }

.titlebar {
  display: flex;
  align-items: center;
  height: 14px;
  padding: 0 1px 1px;
  gap: 4px;
  border-top: 1px solid #6d83a3;
  background: linear-gradient(#8eabd0, #b4cbe6);
}
.titlebar h1 { flex: 1; margin: 0; font-size: 7px; font-weight: 400; color: #3c4660; }
.winbuttons { display: flex; gap: 2px; }
.winbuttons button { width: 19px; height: 11px; border: 1px solid #7189a8; border-radius: 1px; background: linear-gradient(#c3d6eb, #97b3d2); }
.winbuttons .close { border-color: #8f4a50; background: linear-gradient(#e09a8c, #bf3e2c); }
.winbuttons svg { width: 17px; height: 9px; }

.menu { display: flex; gap: 9px; height: 12px; padding-left: 5px; background: linear-gradient(#f8fafe, #d5dcf0 70%, #e2e7f5); border-bottom: 1px solid #b9bccb; color: #5c4370; }

.toolbar { display: flex; align-items: center; height: 17px; padding-bottom: 1px; background: #eee; border-top: 1px solid #fff; }
.grip { width: 4px; height: 14px; border: solid #6d4262; border-width: 0 1px; background: #b99bb2; }
.tools { display: grid; grid-template-columns: repeat(21, 1fr); width: 302px; }
.tools button { display: grid; place-items: center; }
.band { height: 12px; background: #000; border-bottom: 1px solid #777; }

main { flex: 1; min-height: 0; display: grid; grid-template-columns: 148px 1fr; gap: 2px; }
aside { display: grid; grid-template: 1fr 10px / 1fr 11px; min-height: 0; border: 1px solid #888; border-right-color: #ccc; background: #f0f0f0; }
.tree { margin: 0; padding: 0 0 0 1px; overflow: hidden; list-style: none; background: #fff; min-height: 0; white-space: nowrap; }
.tree li, .name { display: flex; height: 11px; }
.tree li:nth-child(4n), tbody tr:nth-child(4n) .name { height: 12px; }
.tree svg, .name svg { margin-left: 1px; }
.tree span, .tree b { margin-left: 2px; padding: 0 1px; }
.tree b { color: #2c2633; }
.selected span { background: #ededed; }

/* tree connector cells */
.g { position: relative; flex: none; width: 12px; display: grid; place-items: center; }
.g.v::before, .g.t::before, .g.first::before { content: ""; position: absolute; left: 6px; top: 0; bottom: 0; border-left: 1px dotted #c2c2c6; }
.g.first::before { top: 50%; }
.g.last::before { bottom: 50%; }
.g.t::after, .g.first::after, .g.only::after { content: ""; position: absolute; left: 6px; right: 0; top: 5px; border-top: 1px dotted #c2c2c6; }
.box { position: relative; z-index: 1; width: 6px; height: 6px; margin-left: 1px; border: 1px solid #b9b9c2; background: linear-gradient(#778, #778) center / 2px 1px no-repeat #fff; }
.box.plus { background: linear-gradient(#8a90a0, #8a90a0) center / 4px 1px no-repeat, linear-gradient(#8a90a0, #8a90a0) center / 1px 4px no-repeat #fff; }

.tree li:first-child, .tree li:nth-child(30) { gap: 0; }
.tree .root b { margin-left: 2px; }
.tree { padding-left: 2px; }

.vscroll { display: flex; flex-direction: column; align-items: center; justify-content: space-between; background: #f0f0f0; }
.vscroll svg, .hscroll svg { width: 6px; height: 6px; color: #555; margin: 2px; }
.vscroll .thumb { height: 82%; width: 9px; margin-bottom: 75px; }
.thumb { display: grid; place-items: center; border: 1px solid #a8a8a8; border-radius: 1px; background: linear-gradient(90deg, #f5f5f5, #cfcfd2); }
.thumb i { width: 4px; height: 5px; background: repeating-linear-gradient(#777 0 1px, #eee 1px 2px); }
.down { transform: rotate(180deg); }
.left { transform: rotate(270deg); }
.right { transform: rotate(90deg); }
.hscroll { display: flex; align-items: center; background: #f0f0f0; }
.hscroll .thumb { width: 95px; height: 9px; margin-right: auto; margin-left: 1px; background: linear-gradient(#f5f5f5, #cfcfd2); }
.hscroll .thumb i { width: 5px; height: 4px; background: repeating-linear-gradient(90deg, #777 0 1px, #eee 1px 2px); }

.details { min-width: 0; overflow: hidden; border: 1px solid #888; border-right-color: #ddd; background: #fff; }
table { width: 100%; table-layout: fixed; border-collapse: separate; border-spacing: 0; white-space: nowrap; }
.c-name { width: 186px; }
.c-value { width: 376px; }
th { height: 14px; padding: 0 4px; text-align: left; font-size: 8px; color: #111; border-right: 1px solid #e2e4e8; border-bottom: 1px solid #ddd; background: linear-gradient(#fff, #f2f3f5); }
th:last-child { border-right: 0; }
td { padding: 0; }
td + td { padding-left: 7px; }
.name span { flex: 1; margin-left: 1px; padding-left: 1px; }
.focus .name span, .focus td + td { border-top: 1px dotted #aaa; line-height: 10px; }
.focus .name span { border-left: 1px dotted #aaa; }
.band-row .name span, .band-row td + td { background: #3399fa; color: #fff; font-weight: 600; }

.status { display: flex; height: 13px; align-items: center; justify-content: flex-end; border-top: 1px solid #ccc; }
.status span { height: 9px; line-height: 9px; border-left: 1px solid #d0cccc; width: 19px; }
.status .num { width: 23px; padding-left: 2px; }
.status .gap { width: 22px; }
.status .date { width: 63px; padding-left: 2px; }

.taskbar { display: flex; align-items: center; height: 18px; background: linear-gradient(90deg, #7189ab, #a6bfde 5%, #a6bfde 78%, #8396b0 84%, #7d90aa); border-top: 1px solid #8397b2; }
.start { margin: -4px 7px 0 5px; }
.start svg { width: 23px; height: 23px; }
.apps { display: flex; flex: 1; gap: 2px; padding-left: 2px; }
.apps button { display: grid; place-items: center; width: 27px; height: 17px; border-radius: 2px; }
.apps .open { border: 1px solid #7d96b8; background: linear-gradient(#d3e0f0, #afc6e2); }
.apps .active { background: #e4edf7; }
.apps svg { width: 12px; height: 12px; }
.tray { display: flex; align-items: center; gap: 4px; color: #fff; }
.lang { margin-right: 4px; }
.tray .up { width: 6px; height: 6px; margin-right: 4px; }
.tray time { margin: 0 14px 0 16px; }
.desk { width: 8px; height: 17px; border: 1px solid #52647c; background: linear-gradient(135deg, #93a5bc, #63768f); }
```
